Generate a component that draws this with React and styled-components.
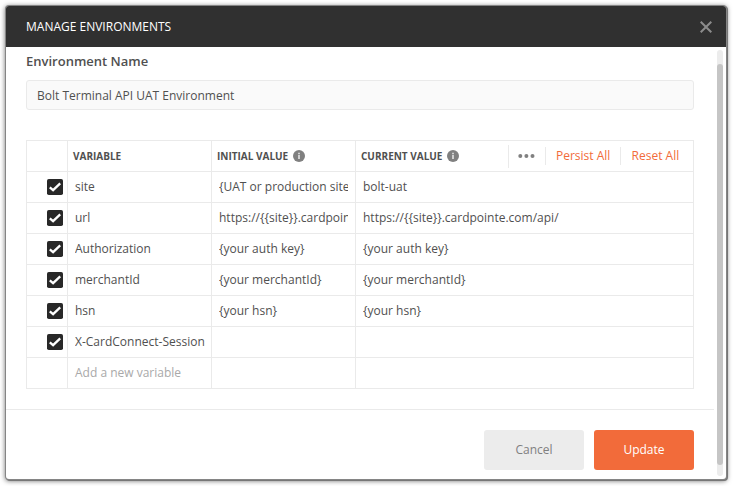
import React from "react";
import styled, { createGlobalStyle } from "styled-components";

const Global = createGlobalStyle`
  * { box-sizing: border-box; }
  html, body { margin: 0; background: #fff; overflow: hidden; }
  body { font-family: "Open Sans", "Noto Sans", sans-serif; font-size: 12px; color: #505050; }
`;

const Backdrop = styled.div`
  width: 733px;
  height: 486px;
  padding: 6px 7px 7px 6px;
`;

const Modal = styled.section`
  display: flex;
  flex-direction: column;
  width: 720px;
  height: 473px;
  background: #fff;
  border-radius: 3px;
  box-shadow: 0 0 0 1px #858585, 1px 1px 0 1px #777, 0 1px 5px 1px rgba(0, 0, 0, 0.55);
`;

const Header = styled.header`
  display: flex;
  flex: none;
  align-items: center;
  justify-content: space-between;
  height: 41px;
  padding: 0 14px 0 20px;
  background: #303030;
  border-radius: 3px 3px 0 0;
`;

const Title = styled.h1`
  margin: 0;
  font-size: 12px;
  font-weight: 400;
  line-height: 18px;
  color: #fff;
`;

const CloseButton = styled.button`
  display: flex;
  padding: 0;
  border: 0;
  background: none;
`;

const Body = styled.div`
  display: flex;
  flex: 1;
  justify-content: space-between;
`;

const Content = styled.div`
  display: flex;
  flex-direction: column;
  width: 708px;
`;

const Form = styled.div`
  height: 363px;
  padding: 4px 20px 0;
  border-bottom: 1px solid #eaeaea;
`;

const Label = styled.label`
  display: block;
  height: 29px;
  font-size: 13px;
  font-weight: 600;
  line-height: 20px;
`;

const NameField = styled.div`
  height: 30px;
  width: 668px;
  padding: 0 10px;
  border: 1px solid #eaeaea;
  border-radius: 3px;
  background: #fafafa;
  line-height: 29px;
`;

const Table = styled.div`
  display: grid;
  grid-template-columns: 41px 144px 144px 338px;
  grid-auto-rows: 31px;
  width: 668px;
  margin-top: 30px;
  border: solid #eaeaea;
  border-width: 1px 0 0 1px;
`;

const Cell = styled.div`
  padding: 0 7px;
  border: solid #eaeaea;
  border-width: 0 1px 1px 0;
  line-height: 29px;
  color: ${(p) => (p.$muted ? "#a9a9a9" : "#505050")};
`;

const CellText = styled.div`
  overflow: hidden;
  white-space: nowrap;
  width: ${(p) => (p.$wide ? "134px" : "auto")};
`;

const CheckCell = styled(Cell)`
  display: flex;
  align-items: center;
  justify-content: flex-end;
  padding: 0 4px 0 0;
`;

const HeadCell = styled(Cell)`
  display: flex;
  align-items: center;
  padding: 0 0 0 5px;
  font-size: 10px;
  font-weight: 700;
  gap: 5px;
`;

const Actions = styled.div`
  display: flex;
  align-items: center;
  margin-left: auto;
  font-size: 12px;
  font-weight: 400;
`;

const MoreAction = styled.div`
  display: flex;
  align-items: center;
  justify-content: center;
  width: 37px;
  height: 23px;
  padding: 0 1px 1px 0;
  border-left: 1px solid #eaeaea;
`;

const TextAction = styled.div`
  width: ${(p) => p.$width}px;
  height: 18px;
  padding-left: ${(p) => p.$inset}px;
  border-left: 1px solid #eaeaea;
  color: #f26b3a;
  line-height: 17px;
  white-space: nowrap;
`;

const Footer = styled.footer`
  display: flex;
  justify-content: flex-end;
  gap: 10px;
  padding: 20px 20px 0 0;
`;

const Button = styled.button`
  width: 100px;
  height: 40px;
  padding: 0 0 1px;
  border: 0;
  border-radius: 3px;
  background: ${(p) => (p.$primary ? "#f26b3a" : "#ececec")};
  color: ${(p) => (p.$primary ? "#fff" : "#808080")};
  font: ${(p) => (p.$primary ? 500 : 400)} 12px "Open Sans", sans-serif;
`;

const ScrollTrack = styled.div`
  width: 6px;
  height: 426px;
  margin: 3px 3px 0 0;
  padding-top: 14px;
  border-radius: 3px;
  background: #ececec;
`;

const ScrollThumb = styled.div`
  height: 401px;
  border-radius: 3px;
  background: #c5c5c5;
`;

const CloseIcon = () => (
  <svg width="12" height="12" viewBox="0 0 12 12">
    <path d="M.7 .7L11.3 11.3M11.3 .7L.7 11.3" stroke="#8c8c8c" strokeWidth="2" />
  </svg>
);

const CheckIcon = () => (
  <svg width="16" height="16" viewBox="0 0 16 16">
    <rect width="16" height="16" rx="1.8" fill="#282828" />
    <path d="M2.8 8.4L6.1 11.2L13.2 4.4" fill="none" stroke="#fff" strokeWidth="2.3" />
  </svg>
);

const InfoIcon = () => (
  <svg width="12" height="12" viewBox="0 0 12 12">
    <circle cx="6" cy="6" r="6" fill="#808080" />
    <path d="M6 2.7V4M6 4.8V9" stroke="#dedede" strokeWidth="1.7" />
  </svg>
);

const DotsIcon = () => (
  <svg width="17" height="4" viewBox="0 0 17 4">
    <circle cx="2.3" cy="2" r="2" fill="#808080" />
    <circle cx="8.4" cy="2" r="2" fill="#808080" />
    <circle cx="14.5" cy="2" r="2" fill="#808080" />
  </svg>
);

const variables = [
  ["site", "{UAT or production site}", "bolt-uat"],
  ["url", "https://{{site}}.cardpointe.com/api/", "https://{{site}}.cardpointe.com/api/"],
  ["Authorization", "{your auth key}", "{your auth key}"],
  ["merchantId", "{your merchantId}", "{your merchantId}"],
  ["hsn", "{your hsn}", "{your hsn}"],
  ["X-CardConnect-Session", "", ""],
];

function VariableRow({ values }) {
  const [name, initial, current] = values;
  return (
    <>
      <CheckCell><CheckIcon /></CheckCell>
      <Cell><CellText $wide>{name}</CellText></Cell>
      <Cell><CellText>{initial}</CellText></Cell>
      <Cell><CellText>{current}</CellText></Cell>
    </>
  );
}

export default function App() {
  return (
    <Backdrop>
      <Global />
      <Modal>
        <Header>
          <Title>MANAGE ENVIRONMENTS</Title>
          <CloseButton aria-label="Close"><CloseIcon /></CloseButton>
        </Header>
        <Body>
          <Content>
            <Form>
              <Label>Environment Name</Label>
              <NameField>Bolt Terminal API UAT Environment</NameField>
              <Table>
                <HeadCell />
                <HeadCell>VARIABLE</HeadCell>
                <HeadCell>INITIAL VALUE <InfoIcon /></HeadCell>
                <HeadCell>
                  CURRENT VALUE <InfoIcon />
                  <Actions>
                    <MoreAction><DotsIcon /></MoreAction>
                    <TextAction $width={75} $inset={10}>Persist All</TextAction>
                    <TextAction $width={73} $inset={10.6}>Reset All</TextAction>
                  </Actions>
                </HeadCell>
                {variables.map((v) => <VariableRow key={v[0]} values={v} />)}
                <Cell />
                <Cell $muted>Add a new variable</Cell>
                <Cell />
                <Cell />
              </Table>
            </Form>
            <Footer>
              <Button>Cancel</Button>
              <Button $primary>Update</Button>
            </Footer>
          </Content>
          <ScrollTrack><ScrollThumb /></ScrollTrack>
        </Body>
      </Modal>
    </Backdrop>
  );
}
